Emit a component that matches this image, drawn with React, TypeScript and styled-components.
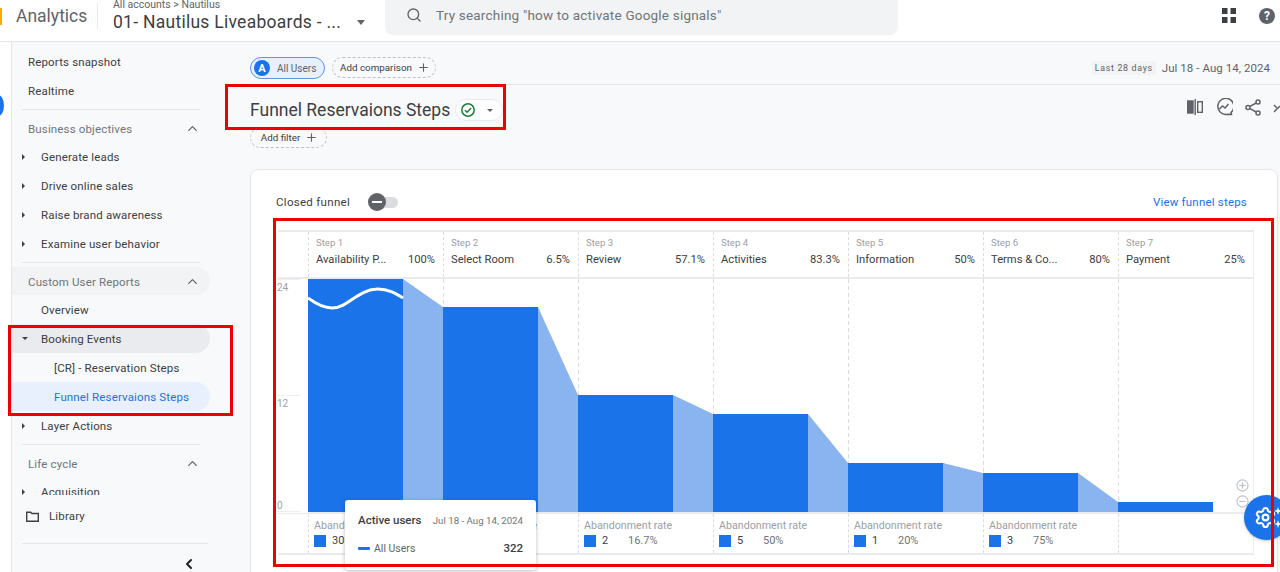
import React from "react";
import styled, { createGlobalStyle } from "styled-components";
import { ChevronLeft, ChevronUp, Plus, Search, Settings } from "lucide-react";

const GlobalStyle = createGlobalStyle`
  html, body {
    margin: 0;
    padding: 0;
    height: 572px;
    overflow: hidden;
    background: #f8f9fb;
    font-family: Roboto, "Liberation Sans", sans-serif;
    color: #3c4043;
  }
  * { box-sizing: border-box; }
`;

const Shell = styled.div`
  position: relative;
  width: 1280px;
  height: 572px;
  overflow: hidden;
  display: flex;
  flex-direction: column;
`;

const TopBar = styled.header`
  position: relative;
  height: 42px;
  flex: none;
  display: flex;
  align-items: flex-start;
  background: #fff;
  border-bottom: 1px solid #e3e5e8;
`;

const LogoSliver = styled.span`
  position: absolute;
  left: 0;
  top: 8px;
  width: 2px;
  height: 17px;
  background: #f9ab00;
`;

const Product = styled.div`
  margin-top: 3px;
  margin-left: 16px;
  width: 82px;
  height: 26px;
  line-height: 27px;
  font-size: 17.5px;
  color: #5f6368;
  border-right: 1px solid #e8eaed;
`;

const Account = styled.div`
  width: 287px;
  padding-left: 15px;
`;

const Crumbs = styled.div`
  font-size: 10.5px;
  line-height: 10px;
  color: #5f6368;
`;

const AccountName = styled.div`
  display: flex;
  align-items: center;
  font-size: 17.5px;
  line-height: 24px;
  color: #3c4043;
  letter-spacing: 0.27px;
`;

const Caret = styled.span<{ $dir?: "down" | "right"; $color?: string }>`
  display: inline-block;
  width: 0;
  height: 0;
  ${(p) =>
    p.$dir === "right"
      ? `border-top: 3px solid transparent;
         border-bottom: 3px solid transparent;
         border-left: 3px solid ${p.$color || "#3c4043"};`
      : `border-left: 3px solid transparent;
         border-right: 3px solid transparent;
         border-top: 3px solid ${p.$color || "#3c4043"};`}
`;

const AccountCaret = styled(Caret)`
  margin-left: 16px;
  border-left-width: 4.5px;
  border-right-width: 4.5px;
  border-top-width: 5px;
  border-top-color: #5f6368;
`;

const SearchBox = styled.div`
  width: 513px;
  height: 35px;
  display: flex;
  align-items: center;
  gap: 14px;
  padding-left: 21px;
  padding-bottom: 5px;
  background: #f1f3f4;
  border-radius: 0 0 8px 8px;
  font-size: 13.5px;
  color: #70757a;
  letter-spacing: 0.2px;
`;

const TopIcons = styled.div`
  margin-left: auto;
  height: 31px;
  display: flex;
  align-items: center;
  gap: 23px;
  padding-right: 5px;
`;

const Body = styled.div`
  flex: 1;
  display: flex;
  min-height: 0;
`;

const Rail = styled.div`
  width: 12px;
  flex: none;
  background: #fff;
  border-right: 1px solid #e3e5e8;
`;

const RailDot = styled.span`
  position: absolute;
  left: -8px;
  top: 95px;
  width: 12px;
  height: 21px;
  border-radius: 50%;
  background: #1a73e8;
`;

const Sidebar = styled.aside`
  width: 210px;
  flex: none;
  display: flex;
  flex-direction: column;
`;

const NavScroll = styled.nav`
  width: 198px;
  height: 453px;
  flex: none;
  overflow: hidden;
  padding-top: 5px;
`;

const NavItem = styled.div<{ $indent?: number; $tone?: "head" | "active" | "open" | "plain"; $section?: boolean; $muted?: boolean }>`
  position: relative;
  height: ${(p) => (p.$section ? 28 : 29)}px;
  display: flex;
  align-items: center;
  padding-top: ${(p) => (p.$section ? 1 : 0)}px;
  padding-left: ${(p) => p.$indent ?? 16}px;
  padding-right: 10px;
  font-size: 11.5px;
  letter-spacing: 0.15px;
  color: ${(p) => (p.$tone === "active" ? "#1a73e8" : p.$muted ? "#70757a" : "#3c4043")};
  background: ${(p) =>
    p.$tone === "active" ? "#e8f0fe" : p.$tone === "open" ? "#e9ebee" : p.$tone === "head" ? "#f1f3f4" : "transparent"};
  border-radius: ${(p) => (p.$tone && p.$tone !== "plain" ? "0 15px 15px 0" : "0")};
`;

const NavCaret = styled.span`
  position: absolute;
  left: 10px;
  top: 0;
  bottom: 0;
  display: flex;
  align-items: center;
`;

const NavChevron = styled(ChevronUp)`
  margin-left: auto;
  color: #5f6368;
`;

const NavRule = styled.hr`
  margin: 4px 10px 4px 10px;
  width: 178px;
  border: 0;
  border-top: 1px solid #e3e5e8;
`;

const LibraryRow = styled.div`
  height: 26px;
  flex: none;
  margin-top: 8px;
  display: flex;
  align-items: center;
  gap: 10px;
  padding-left: 14px;
  font-size: 11.5px;
  letter-spacing: 0.15px;
  color: #3c4043;
`;

const FooterRule = styled.hr`
  flex: none;
  margin: 14px 14px 0 10px;
  border: 0;
  border-top: 1px solid #e3e5e8;
`;

const Collapse = styled.div`
  flex: none;
  margin-top: 12px;
  padding-left: 169px;
  color: #202124;
  svg {
    display: block;
  }
`;

const Main = styled.main`
  flex: 1;
  min-width: 0;
  padding-left: 28px;
`;

const ChipRow = styled.div`
  height: 43px;
  display: flex;
  align-items: flex-start;
  gap: 7px;
  padding-top: 15px;
  padding-right: 10px;
  border-bottom: 1px solid #e3e5e8;
`;

const UserChip = styled.div`
  height: 22px;
  width: 75px;
  display: flex;
  align-items: center;
  gap: 7px;
  padding-left: 3px;
  background: #e8f0fe;
  border: 1px solid #5a95e8;
  border-radius: 11px;
  font-size: 10px;
  color: #5f6368;
`;

const Avatar = styled.span`
  width: 16px;
  height: 16px;
  border-radius: 50%;
  background: #1a73e8;
  color: #fff;
  font-size: 11px;
  font-weight: 700;
  display: flex;
  align-items: center;
  justify-content: center;
`;

const DashedChip = styled.div<{ $width: number }>`
  height: 21px;
  width: ${(p) => p.$width}px;
  display: flex;
  align-items: center;
  justify-content: center;
  gap: 5px;
  padding-left: 2px;
  border: 1px dashed #bdc1c6;
  border-radius: 11px;
  font-size: 9.8px;
  color: #3c4043;
`;

const DateRange = styled.div`
  margin-left: auto;
  display: flex;
  align-items: center;
  gap: 6px;
  height: 21px;
  font-size: 11.5px;
  letter-spacing: 0.05px;
  color: #5f6368;
`;

const DateTag = styled.span`
  padding: 2px 3px;
  background: #f1f3f4;
  font-size: 8.8px;
  letter-spacing: 0.7px;
`;

const TitleRow = styled.div`
  height: 42px;
  display: flex;
  align-items: center;
  padding-top: 8px;
`;

const Title = styled.h1`
  margin: 0;
  font-size: 17.5px;
  line-height: 24px;
  font-weight: 400;
  color: #3c4043;
`;

const StatusChip = styled.div`
  margin-left: 5px;
  width: 48px;
  height: 22px;
  display: flex;
  align-items: center;
  gap: 11px;
  padding-left: 4px;
  background: #fff;
  border: 1px solid #e8eaed;
  border-radius: 11px;
`;

const TitleActions = styled.div`
  margin-left: auto;
  margin-right: -9px;
  display: flex;
  align-items: center;
  gap: 12px;
  padding-bottom: 6px;
`;

const Card = styled.section`
  position: relative;
  margin-top: 21px;
  margin-right: 2px;
  height: 420px;
  padding: 20px 0 0 25px;
  background: #fff;
  border: 1px solid #e3e5e8;
  border-radius: 8px;
`;

const CardHead = styled.div`
  width: 971px;
  height: 24px;
  display: flex;
  align-items: center;
  gap: 18px;
  font-size: 11.5px;
  letter-spacing: 0.3px;
  color: #3c4043;
`;

const Toggle = styled.span`
  position: relative;
  width: 30px;
  height: 11px;
  border-radius: 6px;
  background: #dadce0;
`;

const ToggleThumb = styled.span`
  position: absolute;
  left: 0;
  top: -3.5px;
  width: 18px;
  height: 18px;
  border-radius: 50%;
  background: #5f6368;
  display: flex;
  align-items: center;
  justify-content: center;
  &::after {
    content: "";
    width: 10px;
    height: 2px;
    background: #fff;
  }
`;

const FunnelLink = styled.a`
  margin-left: auto;
  color: #1a73e8;
  font-size: 11.5px;
  letter-spacing: 0.2px;
`;

const Chart = styled.div`
  position: relative;
  width: 976px;
  margin: 16px 0 0 2px;
  border-top: 2px solid #e8eaed;
  border-bottom: 2px solid #e8eaed;
  border-right: 1px solid #eceef0;
`;

const StepsHead = styled.div`
  display: grid;
  grid-template-columns: 30px repeat(7, 135px);
  height: 47px;
  border-bottom: 2px solid #e8eaed;
`;

const StepCell = styled.div`
  padding: 4px 8px 0 7px;
  border-left: 1px dashed #dadce0;
`;

const StepLabel = styled.div`
  font-size: 9.6px;
  line-height: 14px;
  color: #9aa0a6;
`;

const StepLine = styled.div`
  margin-top: 2px;
  display: flex;
  justify-content: space-between;
  font-size: 11.2px;
  line-height: 15px;
  color: #3c4043;
`;

const Plot = styled.div`
  display: flex;
  height: 234px;
`;

const YAxis = styled.div`
  width: 30px;
  flex: none;
  display: flex;
  flex-direction: column;
  font-size: 10px;
  line-height: 14px;
  color: #9aa0a6;
`;

const Tick = styled.span`
  display: block;
  height: 116px;
  margin: 0 8px 0 -1px;
  padding-top: 1px;
  border-top: 1px solid #eceef0;
  &:last-child {
    height: 15px;
    margin-top: -14px;
    padding-top: 1px;
    line-height: 15px;
    border-top: 0;
    border-bottom: 1px solid #eceef0;
  }
`;

const ZoomButtons = styled.div`
  position: absolute;
  right: 4px;
  top: 247px;
  display: flex;
  flex-direction: column;
  gap: 3px;
`;

const Abandon = styled.div`
  display: grid;
  grid-template-columns: 30px repeat(7, 135px);
  height: 40px;
  border-top: 1px solid #e8eaed;
`;

const AbandonCell = styled.div`
  padding: 5px 6px 0 5px;
  border-left: 1px dashed #dadce0;
  font-size: 10.7px;
  line-height: 14px;
  color: #9aa0a6;
`;

const AbandonValues = styled.div`
  margin-top: 1px;
  display: flex;
  align-items: center;
  font-size: 11px;
  color: #70757a;
`;

const Swatch = styled.span`
  width: 12px;
  height: 12px;
  margin-right: 6px;
  background: #1a73e8;
`;

const Count = styled.span`
  width: 26px;
  color: #3c4043;
`;

const Tooltip = styled.div`
  position: absolute;
  left: 345px;
  top: 500px;
  width: 191px;
  height: 70px;
  padding: 8px 13px 0 13px;
  background: #fff;
  border-radius: 3px;
  box-shadow: 0 1px 4px rgba(60, 64, 67, 0.35);
  z-index: 2;
`;

const TooltipHead = styled.div`
  display: flex;
  align-items: center;
  justify-content: space-between;
  height: 24px;
  font-size: 9.7px;
  color: #70757a;
`;

const TooltipTitle = styled.strong`
  font-size: 11.5px;
  font-weight: 500;
  color: #3c4043;
`;

const TooltipRow = styled.div`
  margin-top: 4px;
  display: flex;
  align-items: center;
  height: 24px;
  font-size: 10.5px;
  color: #5f6368;
`;

const TooltipDash = styled.span`
  width: 12px;
  height: 3px;
  margin-right: 4px;
  border-radius: 1px;
  background: #1a73e8;
`;

const TooltipValue = styled.strong`
  margin-left: auto;
  font-size: 11.5px;
  font-weight: 500;
  color: #3c4043;
`;

const HelpFab = styled.div`
  position: absolute;
  left: 1244px;
  top: 495px;
  width: 45px;
  height: 45px;
  border-radius: 50%;
  background: #1a73e8;
  box-shadow: 0 1px 3px rgba(60, 64, 67, 0.3);
  z-index: 3;
  display: flex;
  align-items: center;
  padding-left: 10px;
  color: #fff;
`;

const FabSparkles = styled.span`
  position: absolute;
  right: 7px;
  top: 12px;
  display: flex;
  flex-direction: column;
  gap: 5px;
`;

const Mark = styled.div<{ $x: number; $y: number; $w: number; $h: number }>`
  position: absolute;
  left: ${(p) => p.$x}px;
  top: ${(p) => p.$y}px;
  width: ${(p) => p.$w}px;
  height: ${(p) => p.$h}px;
  border: 3.5px solid #ee0000;
  z-index: 4;
  pointer-events: none;
`;

const steps = [
  { name: "Availability P...", pct: "100%", top: 0 },
  { name: "Select Room", pct: "6.5%", top: 28 },
  { name: "Review", pct: "57.1%", top: 116 },
  { name: "Activities", pct: "83.3%", top: 135 },
  { name: "Information", pct: "50%", top: 184 },
  { name: "Terms & Co...", pct: "80%", top: 194 },
  { name: "Payment", pct: "25%", top: 223 },
];

const abandonment = [
  { count: "301", rate: "93.5%" },
  { count: "9", rate: "42.9%" },
  { count: "2", rate: "16.7%" },
  { count: "5", rate: "50%" },
  { count: "1", rate: "20%" },
  { count: "3", rate: "75%" },
];

const COL = 135;
const BAR = 95;
const BASE = 233;

const FunnelPlot = () => (
  <svg width={945} height={234} viewBox="0 0 945 234" style={{ display: "block", flex: "none" }}>
    {steps.map((s, i) => {
      const x = i * COL;
      const next = steps[i + 1];
      return (
        <g key={s.name}>
          <line x1={x + 0.5} x2={x + 0.5} y1={0} y2={234} stroke="#dadce0" strokeDasharray="4 3" />
          {next && (
            <polygon
              points={`${x + BAR},${s.top} ${x + COL},${next.top} ${x + COL},${BASE} ${x + BAR},${BASE}`}
              fill="#8ab4f0"
            />
          )}
          <rect x={x} y={s.top} width={BAR} height={BASE - s.top} fill="#1a73e8" />
        </g>
      );
    })}
    <path
      d="M0 19 C8 25 16 29 24 29 C40 29 50 10 70 10 C80 10 87 14 95 19"
      fill="none"
      stroke="#fff"
      strokeWidth={3}
    />
    <line x1={0} x2={945} y1={233.5} y2={233.5} stroke="#eceef0" />
  </svg>
);

const Sparkle = () => (
  <svg width="8" height="8" viewBox="0 0 8 8">
    <path d="M4 0 L5 3 L8 4 L5 5 L4 8 L3 5 L0 4 L3 3 Z" fill="#fff" />
  </svg>
);

const ZoomIcon = ({ minus }: { minus?: boolean }) => (
  <svg width="13" height="13" viewBox="0 0 14 14" fill="none" stroke="#bdc1c6" strokeWidth="1.2">
    <circle cx="7" cy="7" r="6" />
    <path d="M3.5 7h7" />
    {!minus && <path d="M7 3.5v7" />}
  </svg>
);

const App = () => (
  <Shell>
    <GlobalStyle />
    <TopBar>
      <LogoSliver />
      <Product>Analytics</Product>
      <Account>
        <Crumbs>All accounts &gt; Nautilus</Crumbs>
        <AccountName>
          01- Nautilus Liveaboards - ...
          <AccountCaret />
        </AccountName>
      </Account>
      <SearchBox>
        <Search size={16} color="#5f6368" strokeWidth={2} />
        Try searching "how to activate Google signals"
      </SearchBox>
      <TopIcons>
        <svg width="14" height="15" viewBox="0 0 14 15" fill="#3c4043">
          <rect width="5.5" height="6" />
          <rect x="8.5" width="5.5" height="6" />
          <rect y="9" width="5.5" height="6" />
          <rect x="8.5" y="9" width="5.5" height="6" />
        </svg>
        <svg width="16" height="16" viewBox="0 0 16 16">
          <circle cx="8" cy="8" r="8" fill="#5f6368" />
          <text x="8" y="12.3" textAnchor="middle" fontSize="12" fontWeight="700" fill="#fff" fontFamily="Roboto, sans-serif">
            ?
          </text>
        </svg>
      </TopIcons>
    </TopBar>
    <Body>
      <Rail />
      <RailDot />
      <Sidebar>
        <NavScroll>
          <NavItem>Reports snapshot</NavItem>
          <NavItem>Realtime</NavItem>
          <NavRule />
          <NavItem $muted $section>
            Business objectives
            <NavChevron size={15} />
          </NavItem>
          {["Generate leads", "Drive online sales", "Raise brand awareness", "Examine user behavior"].map((label) => (
            <NavItem key={label} $indent={29}>
              <NavCaret>
                <Caret $dir="right" />
              </NavCaret>
              {label}
            </NavItem>
          ))}
          <NavRule />
          <NavItem $muted $section $tone="head">
            Custom User Reports
            <NavChevron size={15} />
          </NavItem>
          <NavItem $indent={29}>Overview</NavItem>
          <NavItem $indent={29} $tone="open">
            <NavCaret>
              <Caret $dir="down" />
            </NavCaret>
            Booking Events
          </NavItem>
          <NavItem $indent={42}>[CR] - Reservation Steps</NavItem>
          <NavItem $indent={42} $tone="active">
            Funnel Reservaions Steps
          </NavItem>
          <NavItem $indent={29}>
            <NavCaret>
              <Caret $dir="right" />
            </NavCaret>
            Layer Actions
          </NavItem>
          <NavRule />
          <NavItem $muted $section>
            Life cycle
            <NavChevron size={15} />
          </NavItem>
          <NavItem $indent={29}>
            <NavCaret>
              <Caret $dir="right" />
            </NavCaret>
            Acquisition
          </NavItem>
        </NavScroll>
        <LibraryRow>
          <svg width="13" height="11" viewBox="0 0 13 11" fill="none" stroke="#3c4043" strokeWidth="1.4">
            <path d="M0.7 1.2h4l1.2 1.3h6.4v7.8H0.7z" />
          </svg>
          Library
        </LibraryRow>
        <FooterRule />
        <Collapse>
          <ChevronLeft size={16} strokeWidth={3} />
        </Collapse>
      </Sidebar>
      <Main>
        <ChipRow>
          <UserChip>
            <Avatar>A</Avatar>
            All Users
          </UserChip>
          <DashedChip $width={104}>
            Add comparison
            <Plus size={13} color="#5f6368" />
          </DashedChip>
          <DateRange>
            <DateTag>Last 28 days</DateTag>
            Jul 18 - Aug 14, 2024
          </DateRange>
        </ChipRow>
        <TitleRow>
          <Title>Funnel Reservaions Steps</Title>
          <StatusChip>
            <svg width="16" height="16" viewBox="0 0 16 16" fill="none" stroke="#188038" strokeWidth="1.5">
              <circle cx="8" cy="8" r="6.2" />
              <path d="M5 8.2l2.1 2.1 4-4.2" />
            </svg>
            <Caret $color="#5f6368" />
          </StatusChip>
          <TitleActions>
            <svg width="16" height="16" viewBox="0 0 16 16" fill="none" stroke="#5f6368" strokeWidth="1.4">
              <rect x="0.5" y="2" width="5.5" height="12" fill="#5f6368" />
              <path d="M8.2 0v16" />
              <rect x="10.7" y="2.7" width="4.6" height="10.6" />
            </svg>
            <svg width="18" height="18" viewBox="0 0 18 18" fill="none" stroke="#5f6368" strokeWidth="1.5">
              <path d="M16 14.5A8 8 0 1 0 12.5 16.2L16.5 16.5z" />
              <path d="M4.5 11l3-3 2.5 2 3.5-4" />
            </svg>
            <svg width="16" height="17" viewBox="0 0 16 17" fill="none" stroke="#5f6368" strokeWidth="1.5">
              <circle cx="13" cy="3" r="2" />
              <circle cx="3" cy="8.5" r="2" />
              <circle cx="13" cy="14" r="2" />
              <path d="M5 7.4l6.2-3.4M5 9.6l6.2 3.4" />
            </svg>
            <svg width="16" height="16" viewBox="0 0 16 16" fill="none" stroke="#5f6368" strokeWidth="1.5">
              <path d="M1 13L7 7M10 2h4v4M14 2L8 8" />
              <path d="M1 6l3 3" />
            </svg>
          </TitleActions>
        </TitleRow>
        <DashedChip $width={77}>
          Add filter
          <Plus size={13} color="#5f6368" />
        </DashedChip>
        <Card>
          <CardHead>
            Closed funnel
            <Toggle>
              <ToggleThumb />
            </Toggle>
            <FunnelLink>View funnel steps</FunnelLink>
          </CardHead>
          <Chart>
            <StepsHead>
              <span />
              {steps.map((s, i) => (
                <StepCell key={s.name}>
                  <StepLabel>Step {i + 1}</StepLabel>
                  <StepLine>
                    <span>{s.name}</span>
                    <span>{s.pct}</span>
                  </StepLine>
                </StepCell>
              ))}
            </StepsHead>
            <Plot>
              <YAxis>
                <Tick>24</Tick>
                <Tick>12</Tick>
                <Tick>0</Tick>
              </YAxis>
              <FunnelPlot />
            </Plot>
            <ZoomButtons>
              <ZoomIcon />
              <ZoomIcon minus />
            </ZoomButtons>
            <Abandon>
              <span />
              {abandonment.map((a) => (
                <AbandonCell key={a.rate}>
                  Abandonment rate
                  <AbandonValues>
                    <Swatch />
                    <Count>{a.count}</Count>
                    {a.rate}
                  </AbandonValues>
                </AbandonCell>
              ))}
              <AbandonCell />
            </Abandon>
          </Chart>
        </Card>
      </Main>
    </Body>
    <Tooltip>
      <TooltipHead>
        <TooltipTitle>Active users</TooltipTitle>
        Jul 18 - Aug 14, 2024
      </TooltipHead>
      <TooltipRow>
        <TooltipDash />
        All Users
        <TooltipValue>322</TooltipValue>
      </TooltipRow>
    </Tooltip>
    <HelpFab>
      <Settings size={23} strokeWidth={2.2} />
      <FabSparkles>
        <Sparkle />
        <Sparkle />
      </FabSparkles>
    </HelpFab>
    <Mark $x={225} $y={84} $w={281} $h={46} />
    <Mark $x={8} $y={325} $w={225} $h={91} />
    <Mark $x={273} $y={218} $w={1001} $h={349} />
  </Shell>
);

export default App;
